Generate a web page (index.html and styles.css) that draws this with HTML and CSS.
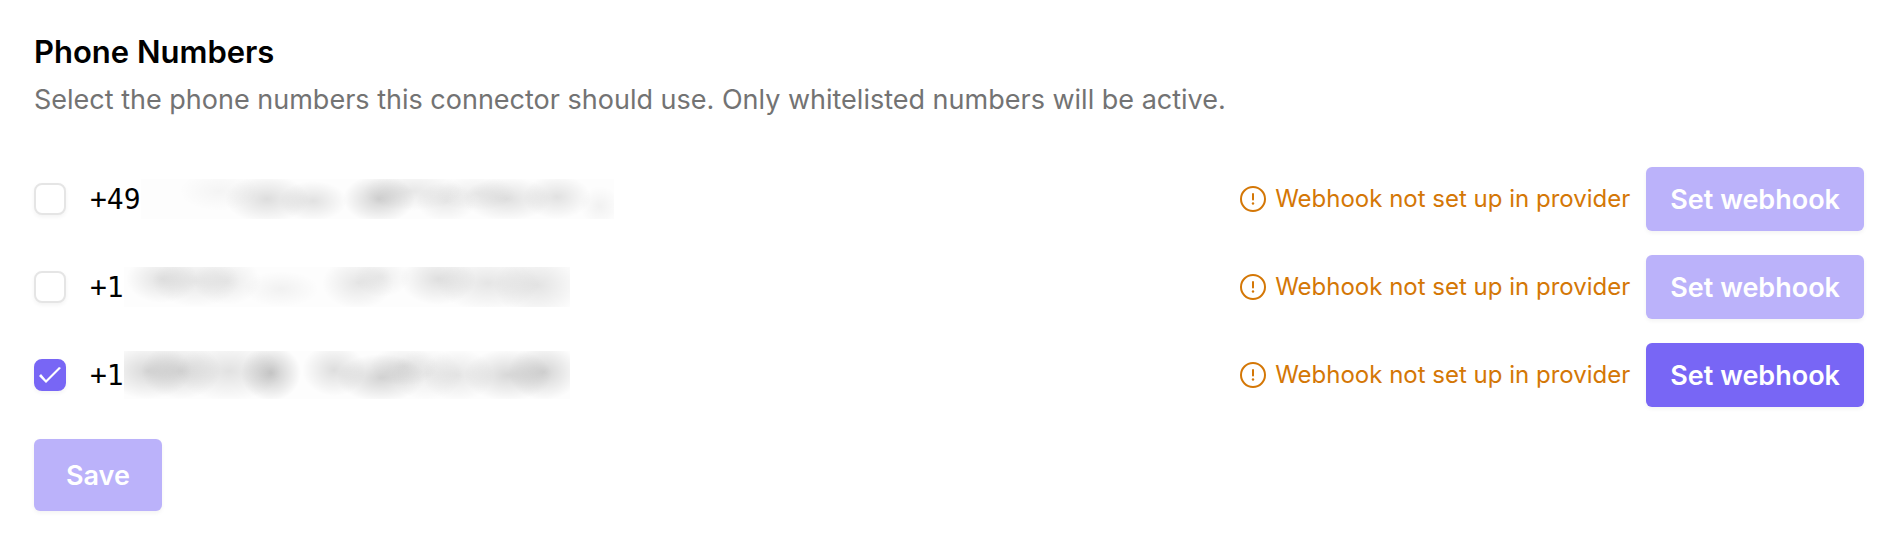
FILE: index.html
```html
<!DOCTYPE html>
<html lang="en">
<head>
    <meta charset="UTF-8">
    <meta name="viewport" content="width=device-width, initial-scale=1.0">
    <title>Phone Numbers</title>
    <link rel="stylesheet" href="styles.css">
</head>
<body>
    <!-- shared warning icon -->
    <svg class="icon-defs" width="0" height="0" aria-hidden="true">
        <symbol id="icon-alert" viewBox="0 0 28 28">
            <circle cx="14" cy="14" r="12" fill="none" stroke="currentColor" stroke-width="2"/>
            <path d="M14 9v5.5" fill="none" stroke="currentColor" stroke-width="2" stroke-linecap="round"/>
            <circle cx="14" cy="18.5" r="1.2" fill="currentColor"/>
        </symbol>
    </svg>

    <form class="phone-numbers" id="phoneForm">
        <h1>Phone Numbers</h1>
        <p class="description">Select the phone numbers this connector should use. Only whitelisted numbers will be active.</p>

        <div class="number-list">
            <div class="number-row">
                <input type="checkbox" id="phone1">
                <label for="phone1">+49<span class="redacted redacted-1"></span></label>
                <span class="warning"><svg class="icon" aria-hidden="true"><use href="#icon-alert"/></svg>Webhook not set up in provider</span>
                <button type="button" class="btn" disabled>Set webhook</button>
            </div>
            <div class="number-row">
                <input type="checkbox" id="phone2">
                <label for="phone2">+1<span class="redacted redacted-2"></span></label>
                <span class="warning"><svg class="icon" aria-hidden="true"><use href="#icon-alert"/></svg>Webhook not set up in provider</span>
                <button type="button" class="btn" disabled>Set webhook</button>
            </div>
            <div class="number-row">
                <input type="checkbox" id="phone3" checked>
                <label for="phone3">+1<span class="redacted redacted-3"></span></label>
                <span class="warning"><svg class="icon" aria-hidden="true"><use href="#icon-alert"/></svg>Webhook not set up in provider</span>
                <button type="button" class="btn">Set webhook</button>
            </div>
        </div>

        <button type="submit" class="btn btn-save" disabled>Save</button>
    </form>
</body>
</html>
```
FILE: styles.css
```css
* {
    box-sizing: border-box;
}
body {
    margin: 0;
    background: #fff;
    color: #000;
    font-family: Inter, "Liberation Sans", sans-serif;
}
.icon-defs {
    position: absolute;
}
.phone-numbers {
    padding: 32px 36px 32px 34px;
}
h1 {
    margin: 0;
    font-size: 31px;
    font-weight: 600;
    line-height: 40px;
}
.description {
    margin: 8px 0 0;
    color: #737373;
    font-size: 27px;
    line-height: 40px;
}
.number-list {
    display: flex;
    flex-direction: column;
    gap: 24px;
    margin: 47px 0 32px;
}
.number-row {
    display: flex;
    align-items: center;
}
.number-row label {
    display: flex;
    align-items: center;
    flex: 1;
    height: 48px;
    margin-left: 24px;
    font-family: "DejaVu Sans Mono", monospace;
    font-size: 28px;
}
input[type="checkbox"] {
    appearance: none;
    display: grid;
    place-items: center;
    width: 32px;
    height: 32px;
    margin: 0;
    border: 2px solid #e5e5e5;
    border-radius: 8px;
    background: #fff;
    box-shadow: 0 2px 4px rgba(0, 0, 0, 0.05);
}
input[type="checkbox"]:checked {
    border-color: #7866f5;
    background: #7866f5;
}
/* check mark */
input[type="checkbox"]:checked::before {
    content: "";
    width: 22px;
    height: 16px;
    background: #fff;
    clip-path: polygon(0 9px, 2px 7px, 7px 13px, 20px 0, 22px 1px, 7px 16px);
}
.warning {
    display: flex;
    align-items: center;
    gap: 8px;
    margin-right: 16px;
    color: #d47706;
    font-size: 24px;
    line-height: 32px;
}
.icon {
    width: 28px;
    height: 28px;
}
.btn {
    height: 64px;
    padding: 0 24px;
    border: none;
    border-radius: 6px;
    background: #7866f5;
    box-shadow: 0 2px 4px rgba(0, 0, 0, 0.05);
    color: #fff;
    font-family: inherit;
    font-size: 27px;
    font-weight: 600;
    cursor: pointer;
}
.btn:disabled {
    background: #bbb2fa;
    cursor: default;
}
.btn-save {
    height: 72px;
    padding: 0 32px;
}

/* hidden digits, smudged */
.redacted {
    height: 40px;
    background-color: #fdfdfd;
}
.redacted-1 {
    width: 473px;
    background-image:
        radial-gradient(40px 20px at 78px 12px, #00000009, transparent),
        radial-gradient(42px 24px at 126px 20px, #00000020, transparent),
        radial-gradient(34px 20px at 172px 22px, #0000001c, transparent),
        radial-gradient(36px 24px at 238px 20px, #0000002c, transparent),
        radial-gradient(50px 20px at 272px 12px, #00000016, transparent),
        radial-gradient(30px 20px at 305px 23px, #00000014, transparent),
        radial-gradient(40px 18px at 335px 14px, #00000010, transparent),
        radial-gradient(44px 22px at 366px 20px, #0000001e, transparent),
        radial-gradient(34px 22px at 416px 18px, #0000001c, transparent),
        radial-gradient(20px 20px at 459px 27px, #0000000c, transparent);
}
.redacted-2 {
    width: 446px;
    background-image:
        radial-gradient(36px 24px at 38px 12px, #0000001c, transparent),
        radial-gradient(44px 26px at 72px 14px, #00000016, transparent),
        radial-gradient(34px 24px at 103px 14px, #00000014, transparent),
        radial-gradient(38px 18px at 157px 22px, #0000000c, transparent),
        radial-gradient(36px 26px at 234px 16px, #00000018, transparent),
        radial-gradient(28px 20px at 258px 10px, #00000010, transparent),
        radial-gradient(38px 26px at 314px 12px, #0000001e, transparent),
        radial-gradient(52px 28px at 364px 16px, #00000018, transparent),
        radial-gradient(44px 32px at 414px 18px, #0000001a, transparent);
}
.redacted-3 {
    width: 446px;
    height: 48px;
    background-image:
        radial-gradient(44px 28px at 24px 20px, #00000026, transparent),
        radial-gradient(40px 28px at 57px 20px, #00000024, transparent),
        radial-gradient(52px 30px at 105px 20px, #0000001c, transparent),
        radial-gradient(30px 28px at 147px 22px, #00000036, transparent),
        radial-gradient(32px 26px at 210px 19px, #00000020, transparent),
        radial-gradient(44px 24px at 257px 27px, #0000002a, transparent),
        radial-gradient(34px 20px at 280px 15px, #00000016, transparent),
        radial-gradient(36px 26px at 303px 23px, #00000012, transparent),
        radial-gradient(36px 26px at 334px 24px, #00000018, transparent),
        radial-gradient(44px 26px at 384px 24px, #00000026, transparent),
        radial-gradient(36px 28px at 420px 21px, #0000002a, transparent);
}
```
